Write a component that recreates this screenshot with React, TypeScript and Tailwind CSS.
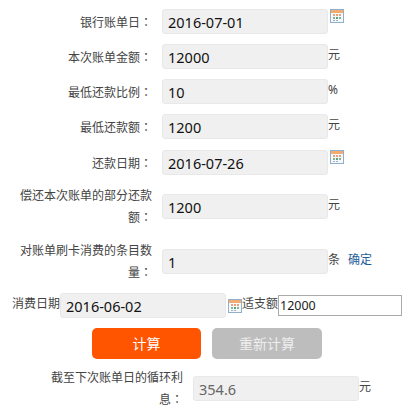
import React from "react";

const CalendarIcon = () => (
  <svg width="14" height="14" viewBox="0 0 14 14" className="shrink-0">
    <rect x="0.5" y="0.5" width="13" height="13" fill="#f6f9fb" stroke="#8fb0cc" />
    <rect x="1" y="1" width="12" height="3" fill="#f4ab70" />
    <rect x="3" y="5" width="2" height="2" fill="#e9a27c" />
    <rect x="6" y="5" width="2" height="2" fill="#e9a27c" />
    <rect x="9" y="5" width="2" height="2" fill="#e9a27c" />
    <rect x="3" y="8" width="2" height="2" fill="#8ab48a" />
    <rect x="6" y="8" width="2" height="2" fill="#5f9f7f" />
    <rect x="9" y="8" width="2" height="2" fill="#8ab48a" />
    <rect x="3" y="11" width="2" height="1" fill="#9cb4ca" />
    <rect x="6" y="11" width="2" height="1" fill="#9cb4ca" />
  </svg>
);

const Field = ({ value, muted }: { value: string; muted?: boolean }) => (
  <input
    readOnly
    value={value}
    className={`h-[25px] w-[166px] shrink-0 rounded-[3px] border border-[#e8e8e8] bg-[#f0f0f0] pl-[5px] text-[14.5px] outline-none ${
      muted ? "text-[#666]" : "text-[#111]"
    }`}
  />
);

// long labels wrap after 11 characters, the last line carries the colon
const Label = ({ lines }: { lines: string[] }) => (
  <label className="w-[140px] shrink-0 text-right leading-[21px]">
    {lines.slice(0, -1).map((line) => (
      <div key={line}>{line}</div>
    ))}
    <div>
      {lines[lines.length - 1]}
      <span className="font-['Noto_Sans_CJK_TC',sans-serif]">：</span>
    </div>
  </label>
);

const rows = [
  { label: ["银行账单日"], value: "2016-07-01", date: true, mb: "mb-[10px]" },
  { label: ["本次账单金额"], value: "12000", unit: "元", mb: "mb-[10px]" },
  { label: ["最低还款比例"], value: "10", unit: "%", mb: "mb-[10px]" },
  { label: ["最低还款额"], value: "1200", unit: "元", mb: "mb-[11px]" },
  { label: ["还款日期"], value: "2016-07-26", date: true, mb: "mb-[10px]" },
  { label: ["偿还本次账单的部分还款", "额"], value: "1200", unit: "元", mb: "mb-[12px]" },
];

export default function App() {
  return (
    <div className="h-[418px] w-[414px] overflow-hidden bg-white pt-[9px] font-['Noto_Sans','Noto_Sans_CJK_SC',sans-serif] text-[12px] text-[#444]">
      {rows.map((row) => (
        <div key={row.label[0]} className={`ml-[12px] flex items-center gap-[10px] ${row.mb}`}>
          <Label lines={row.label} />
          <Field value={row.value} />
          {row.date ? (
            <div className="-ml-[8px] mb-[11px]">
              <CalendarIcon />
            </div>
          ) : (
            <span className="-ml-[10px] -mt-[3px]">{row.unit}</span>
          )}
        </div>
      ))}

      <div className="ml-[12px] flex items-center gap-[10px]">
        <Label lines={["对账单刷卡消费的条目数", "量"]} />
        <Field value="1" />
        <span className="-ml-[10px] -mt-[3px]">条</span>
        <a className="-ml-[2px] -mt-[3px] text-[#1f5c99]">确定</a>
      </div>

      <div className="ml-[12px] mt-[10px] flex items-center">
        <span className="-mt-[4px] w-[48px] shrink-0">消费日期</span>
        <Field value="2016-06-02" />
        <div className="ml-[2px] mt-[1px]">
          <CalendarIcon />
        </div>
        <span className="-mt-[3px] w-[36px] shrink-0">适支额</span>
        <input
          readOnly
          value="12000"
          className="h-[21px] w-[124px] border border-[#aaa] bg-white pl-[1px] text-[12.5px] text-[#222] outline-none"
        />
      </div>

      <div className="ml-[92px] mt-[10px] flex gap-[11px]">
        <button className="h-[31px] w-[109px] rounded-[5px] bg-[#ff5500] text-[14px] text-white">
          计算
        </button>
        <button className="h-[31px] w-[110px] rounded-[5px] bg-[#bdbdbd] text-[14px] text-[#eee]">
          重新计算
        </button>
      </div>

      <div className="ml-[43px] mt-[8px] flex items-center gap-[10px]">
        <Label lines={["截至下次账单日的循环利", "息"]} />
        <Field value="354.6" muted />
        <span className="-ml-[10px] -mt-[3px]">元</span>
      </div>
    </div>
  );
}
